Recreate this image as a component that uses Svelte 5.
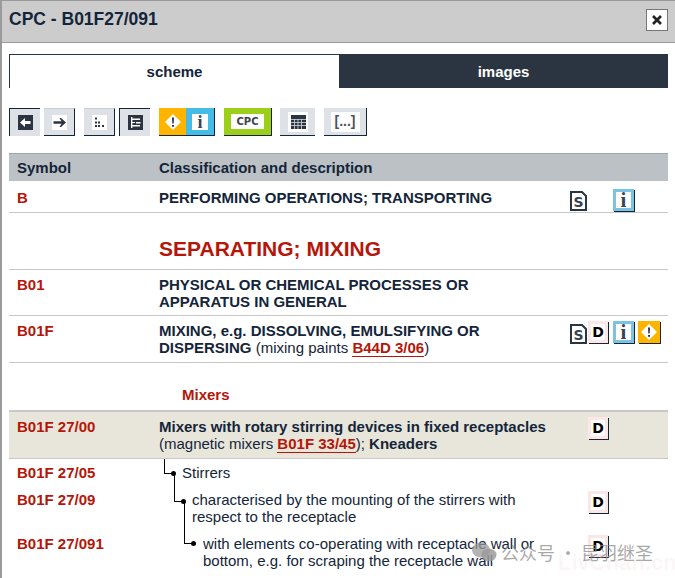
<script>
  const tools = [
    { id: 'back', active: true },
    { id: 'forward' },
    { id: 'dots', gap: true },
    { id: 'tree', active: true }
  ];
</script>

{#snippet toolIcon(id)}
  <svg class="tool-svg" viewBox="0 0 15 15" width="15" height="15">
    {#if id === 'back'}
      <rect width="15" height="15" fill="#2b3441" />
      <path d="M2 7.500 7 3V6H12.500V9H7V12Z" fill="#fff" />
    {:else if id === 'forward'}
      <rect width="15" height="15" fill="#fff" />
      <path d="M14 7.500 9 3H7.500L9.500 6.300H1.500V8.700H9.500L7.500 12H9Z" fill="#2b3441" />
    {:else if id === 'dots'}
      <rect width="15" height="15" fill="#fff" />
      <path d="M3 2.500h2v2H3zM3 6.500h2v2H3zM6 6.500h2v2H6zM3 10h2v2H3zM6 10h2v2H6zM10 10h2v2h-2z" fill="#2b3441" />
    {:else if id === 'tree'}
      <rect width="15" height="15" fill="#2b3441" />
      <path d="M3 2h1.400v11H3zM4.400 3.500H12v1.400H4.400zM4.400 10H12v1.400H4.400zM8 7h4.500v1.400H8zM4.400 7H7v1H4.400z" fill="#fff" />
    {/if}
  </svg>
{/snippet}

{#snippet warnTile()}
  <span class="tile warn">
    <svg viewBox="0 0 18 18" width="18" height="18">
      <path d="M9 1 17 9 9 17 1 9Z" fill="#fff" />
      <path d="M8 4.500h2l-.3 6H8.300zM8 12h2v1.800H8z" fill="#2b3441" />
    </svg>
  </span>
{/snippet}

{#snippet smallIcon(kind)}
  {#if kind === 'S'}
    <span class="mini doc">
      <svg viewBox="0 0 17 20" width="17" height="20">
        <path d="M1 1H12L16 5V19H1Z" fill="#fff" stroke="#2b3441" stroke-width="2" />
        <text x="8.500" y="15.500" text-anchor="middle" class="s-letter">S</text>
      </svg>
    </span>
  {:else if kind === 'D'}
    <span class="mini d-icon"><b>D</b></span>
  {:else if kind === 'i'}
    <span class="mini i-icon"><b>i</b></span>
  {:else}
    <span class="mini w-icon">
      <svg viewBox="0 0 18 18" width="18" height="18">
        <path d="M9 1 17 9 9 17 1 9Z" fill="#fff" />
        <path d="M8 4.500h2l-.3 6H8.300zM8 12h2v1.800H8z" fill="#2b3441" />
      </svg>
    </span>
  {/if}
{/snippet}

<div class="dialog">
  <header class="titlebar">
    <h1>CPC - B01F27/091</h1>
    <button class="close" aria-label="close">
      <svg viewBox="0 0 10 10" width="10" height="10">
        <path d="M1 1 9 9M9 1 1 9" stroke="#222" stroke-width="2.600" />
      </svg>
    </button>
  </header>

  <div class="content">
    <div class="tabs">
      <div class="tab current">scheme</div>
      <div class="tab">images</div>
    </div>

    <div class="toolbar">
      {#each tools as t}
        <button class="tool" class:active={t.active} class:gap={t.gap} aria-label={t.id}>
          {@render toolIcon(t.id)}
        </button>
      {/each}
      <button class="tool pair" aria-label="warnings and info">
        {@render warnTile()}
        <span class="tile info"><b>i</b></span>
      </button>
      <button class="tool cpc" aria-label="cpc"><span>CPC</span></button>
      <button class="tool table-btn" aria-label="table">
        <svg class="tool-svg" viewBox="0 0 20 20" width="20" height="20">
          <rect width="20" height="20" fill="#fff" />
          <rect x="3" y="3" width="15" height="14" fill="#2b3441" />
          <path d="M3 7.500h15M3 10.500h15M3 13.500h15M6.500 7v10M10 7v10M13.500 7v10" stroke="#d5d8dd" stroke-width=".8" />
        </svg>
      </button>
      <button class="tool brackets" aria-label="text"><span>[...]</span></button>
    </div>

    <div class="table">
      <div class="row head">
        <div>Symbol</div>
        <div>Classification and description</div>
      </div>

      <div class="row r-b">
        <div class="sym">B</div>
        <div class="desc strong">PERFORMING OPERATIONS; TRANSPORTING</div>
        <div class="icons spread">{@render smallIcon('S')}{@render smallIcon('i')}</div>
      </div>

      <div class="row r-title">
        <div></div>
        <div class="big">SEPARATING; MIXING</div>
      </div>

      <div class="row r-two">
        <div class="sym">B01</div>
        <div class="desc strong">PHYSICAL OR CHEMICAL PROCESSES OR<br />APPARATUS IN GENERAL</div>
      </div>

      <div class="row r-two r-b01f">
        <div class="sym">B01F</div>
        <div class="desc">
          <span class="strong">MIXING, e.g. DISSOLVING, EMULSIFYING OR<br />DISPERSING</span>
          (mixing paints <a href="#b44d">B44D 3/06</a>)
        </div>
        <div class="icons tight">
          {@render smallIcon('S')}{@render smallIcon('D')}{@render smallIcon('i')}{@render smallIcon('w')}
        </div>
      </div>

      <div class="row r-mixers">
        <div></div>
        <div class="mixers">Mixers</div>
      </div>

      <div class="row r-two r-hl">
        <div class="sym">B01F 27/00</div>
        <div class="desc">
          <span class="strong">Mixers with rotary stirring devices in fixed receptacles</span><br />
          (magnetic mixers <a href="#b01f">B01F 33/45</a>); <span class="strong">Kneaders</span>
        </div>
        <div class="icons d-col">{@render smallIcon('D')}</div>
      </div>

      <div class="row sub sub-1">
        <div class="sym">B01F 27/05</div>
        <div class="desc level l1"><i class="branch"></i>Stirrers</div>
      </div>

      <div class="row sub sub-2">
        <div class="sym">B01F 27/09</div>
        <div class="desc level l2"><i class="branch"></i>characterised by the mounting of the stirrers with<br />respect to the receptacle</div>
        <div class="icons d-col">{@render smallIcon('D')}</div>
      </div>

      <div class="row sub sub-3">
        <div class="sym">B01F 27/091</div>
        <div class="desc level l3"><i class="branch"></i>with elements co-operating with receptacle wall or<br />bottom, e.g. for scraping the receptacle wall</div>
        <div class="icons d-col">{@render smallIcon('D')}</div>
      </div>
    </div>
  </div>

  <div class="watermark">
    <svg viewBox="0 0 26 20" width="26" height="20">
      <ellipse cx="10" cy="8" rx="9" ry="7.500" fill="#9a9a9a" fill-opacity=".75" />
      <ellipse cx="18" cy="13" rx="7.500" ry="6.200" fill="#9a9a9a" fill-opacity=".85" />
    </svg>
    <span>公众号 · 昆羽继圣</span>
  </div>
  <div class="watermark-site">LivChan.cn</div>
</div>

<style>
  :global(body) {
    margin: 0;
    background: #fff;
  }

  .dialog {
    position: relative;
    width: 675px;
    height: 578px;
    box-sizing: border-box;
    overflow: hidden;
    border-left: 2px solid #9a9a9a;
    background: #fff;
    color: #14253a;
    font-family: "Liberation Sans", Arial, sans-serif;
    font-size: 15px;
    line-height: 17px;
  }

  .titlebar {
    height: 41px;
    border-top: 1px solid #999;
    border-bottom: 1px solid #999;
    background: #ccc;
    display: flex;
    align-items: center;
    justify-content: space-between;
    padding: 0 7px;
  }

  h1 {
    margin: 0 0 5px;
    font-size: 17.5px;
    line-height: 20px;
    font-weight: bold;
  }

  .close {
    width: 22px;
    height: 22px;
    padding: 0;
    margin-bottom: 3px;
    border: 1px solid #777;
    background: #fff;
    display: flex;
    align-items: center;
    justify-content: center;
  }

  .content {
    padding: 11px 7px 0;
  }

  .tabs {
    display: grid;
    grid-template-columns: 330px 329px;
    height: 34px;
  }

  .tab {
    display: flex;
    align-items: center;
    justify-content: center;
    box-sizing: border-box;
    background: #2b3441;
    color: #fff;
    font-weight: bold;
  }

  .tab.current {
    background: #fff;
    color: #14253a;
    border: 1px solid #2b3441;
    border-bottom: 0;
    border-right: 0;
  }

  .toolbar {
    display: flex;
    gap: 4px;
    margin-top: 20px;
    height: 28px;
  }

  .tool {
    box-sizing: border-box;
    height: 28px;
    width: 31px;
    padding: 0;
    display: flex;
    align-items: center;
    justify-content: center;
    background: #dee1e6;
    border: 0;
    border-top: 1px solid #c9cdd3;
    border-right: 1px solid #14253a;
    border-bottom: 1px solid #14253a;
  }

  .tool.active {
    border: 0;
    border-top: 1px solid #14253a;
    border-left: 1px solid #14253a;
  }

  .tool.gap {
    margin-left: 5px;
  }

  .tool-svg {
    display: block;
  }

  .pair {
    width: 56px;
    margin-left: 5px;
    border: 0;
    border-right: 1px solid #14253a;
    border-bottom: 1px solid #14253a;
    background: none;
    align-items: stretch;
  }

  .tile {
    flex: 1;
    display: flex;
    align-items: center;
    justify-content: center;
  }

  .tile.warn {
    background: #ffb400;
    flex: 0 0 27px;
  }

  .tile.info {
    background: #45bce5;
  }

  .tile.info b {
    width: 16px;
    height: 16px;
    background: #fff;
    color: #3a4450;
    font: bold 18px/16px "Liberation Serif", serif;
    text-align: center;
  }

  .cpc {
    width: 48px;
    margin-left: 5px;
    background: #9ccf1a;
    border-top: 0;
  }

  .cpc span {
    width: 33px;
    height: 15px;
    background: #fff;
    color: #3a4450;
    font: bold 10px/15px "DejaVu Sans", sans-serif;
    text-align: center;
  }

  .table-btn {
    width: 35px;
    margin-left: 4px;
    border-right: 0;
    border-top: 0;
  }

  .brackets {
    width: 43px;
    margin-left: 5px;
    border-top: 0;
  }

  .brackets span {
    width: 29px;
    height: 20px;
    background: #fff;
    color: #4a5460;
    font: bold 14px/18px "Liberation Sans", sans-serif;
    text-align: center;
  }

  .table {
    margin-top: 17px;
  }

  .row {
    display: grid;
    grid-template-columns: 150px 410px 99px;
    box-sizing: border-box;
    border-bottom: 1px solid #c8c8c8;
  }

  .row > :first-child {
    padding-left: 8px;
  }

  .head {
    height: 28px;
    align-items: center;
    background: #bcc1c5;
    border-top: 1px solid #a3a7aa;
    border-bottom: 0;
    font-weight: bold;
  }

  .sym {
    margin-top: -1px;
    color: #b5160a;
    font-weight: bold;
  }

  .strong {
    font-weight: bold;
  }

  .desc {
    margin-top: -1px;
  }

  .desc a {
    color: #b5160a;
    font-weight: bold;
    text-decoration: none;
    border-bottom: 1px solid #b5160a;
  }

  .r-b {
    height: 32px;
    padding-top: 9px;
  }

  .r-title {
    height: 57px;
    padding-top: 24px;
  }

  .big {
    color: #b5160a;
    font-size: 21px;
    line-height: 24px;
    font-weight: bold;
  }

  .r-two {
    height: 46px;
    padding-top: 7px;
  }

  .r-b01f {
    height: 47px;
  }

  .r-mixers {
    height: 48px;
    padding-top: 23px;
  }

  .mixers {
    padding-left: 23px;
    color: #b5160a;
    font-weight: bold;
  }

  .r-hl {
    height: 48px;
    padding-top: 7px;
    background: #e8e6da;
    border-top: 1px solid #c8c8c8;
  }

  .sub {
    border-bottom: 0;
  }

  .sub-1 {
    height: 27px;
    padding-top: 6px;
  }

  .sub-2 {
    height: 44px;
    padding-top: 6px;
  }

  .sub-3 {
    height: 40px;
    padding-top: 6px;
  }

  .level {
    position: relative;
  }

  .l1 {
    padding-left: 23px;
  }

  .l2 {
    padding-left: 33px;
  }

  .l3 {
    padding-left: 44px;
  }

  .branch {
    position: absolute;
    box-sizing: border-box;
    width: 10px;
    border-left: 1px solid #000;
    border-bottom: 1px solid #000;
  }

  .branch::after {
    content: "";
    position: absolute;
    right: -2px;
    bottom: -3px;
    width: 5px;
    height: 5px;
    border-radius: 50%;
    background: #000;
  }

  .l1 .branch {
    left: 5px;
    top: -5px;
    height: 15px;
  }

  .l2 .branch {
    left: 15px;
    top: -17px;
    height: 28px;
  }

  .l3 .branch {
    left: 25px;
    top: -33px;
    height: 42px;
  }

  .icons {
    display: flex;
    align-items: flex-start;
  }

  .spread {
    padding-left: 1px;
    gap: 26px;
    margin-top: -1px;
  }

  .spread .doc {
    margin-top: 2px;
  }

  .tight {
    padding-left: 1px;
    margin-top: -2px;
  }

  .tight .doc {
    margin-top: 3px;
  }

  .tight .d-icon {
    margin-left: 1px;
  }

  .tight .i-icon {
    margin-left: 5px;
  }

  .tight .w-icon {
    margin-left: 4px;
  }

  .d-col {
    padding-left: 19px;
    margin-top: -1px;
  }

  .r-hl .d-col {
    margin-top: -2px;
  }

  .mini {
    box-sizing: border-box;
    display: flex;
    align-items: center;
    justify-content: center;
    flex: none;
    width: 21px;
    height: 22px;
    box-shadow: 1px 1px 0 #14253a;
  }

  .doc {
    width: 17px;
    height: 20px;
    box-shadow: none;
  }

  .doc svg {
    display: block;
  }

  .s-letter {
    font: bold 14px "DejaVu Sans", sans-serif;
    fill: #3a4450;
  }

  .d-icon {
    width: 20px;
    background: #fff;
    border: 3px solid #fde6e6;
  }

  .d-icon b {
    color: #000;
    font: bold 14px/15px "DejaVu Sans", sans-serif;
  }

  .i-icon {
    background: #fff;
    border: 3px solid #7cc3e2;
  }

  .i-icon b {
    color: #3a4450;
    font: bold 21px/16px "Liberation Serif", serif;
  }

  .w-icon {
    width: 22px;
    background: #ffb400;
  }

  .w-icon svg {
    display: block;
  }

  .watermark {
    position: absolute;
    left: 469px;
    top: 540px;
    display: flex;
    align-items: center;
    gap: 4px;
    color: rgba(140, 140, 140, .75);
    font-family: "Noto Sans CJK SC", sans-serif;
    font-size: 18px;
    line-height: 24px;
    white-space: nowrap;
  }

  .watermark-site {
    position: absolute;
    left: 556px;
    top: 550px;
    color: rgba(235, 200, 200, .16);
    font-size: 22px;
    line-height: 26px;
    font-weight: bold;
    white-space: nowrap;
  }
</style>
